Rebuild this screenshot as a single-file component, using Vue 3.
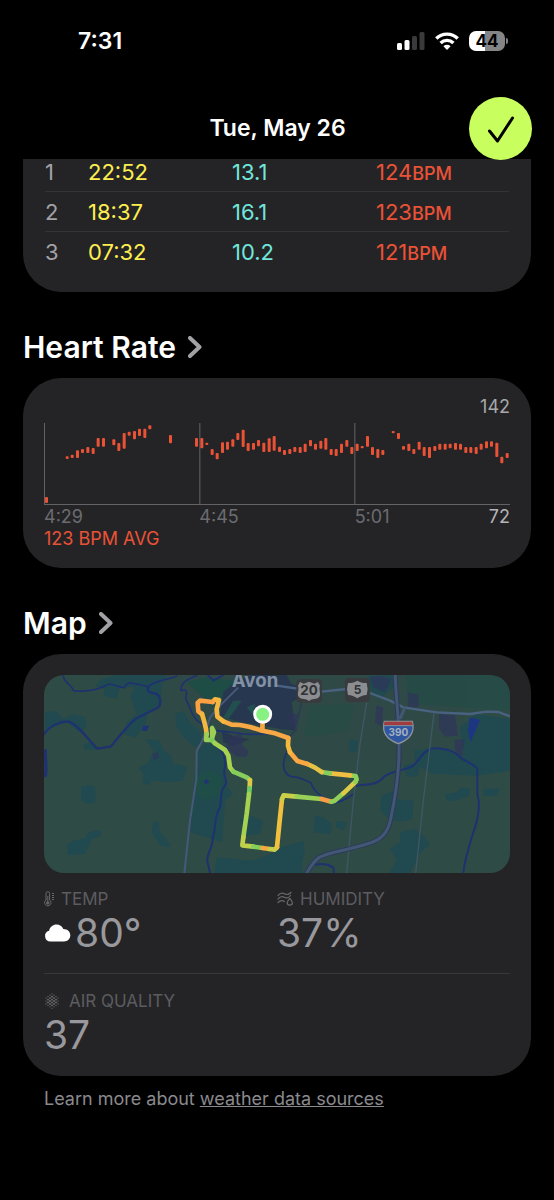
<script setup>
import { ref } from 'vue'

const splits = ref([
  { id: 1, time: '22:52', speed: '13.1', bpm: 124 },
  { id: 2, time: '18:37', speed: '16.1', bpm: 123 },
  { id: 3, time: '07:32', speed: '10.2', bpm: 121 }
])

// [slot, top, bottom], 90 slots across the chart
const bars = [
  [0, 222, 240], [4, 100, 108], [5, 95, 105], [6, 82, 105], [7, 78, 90],
  [8, 72, 90], [9, 75, 93], [10, 45, 71], [11, 45, 71], [13, 49, 67],
  [14, 60, 84], [15, 30, 77], [16, 26, 38], [17, 24, 49], [18, 17, 39],
  [19, 17, 45], [20, 7, 19], [24, 36, 61], [29, 45, 71], [30, 45, 76],
  [31, 59, 66], [32, 78, 96], [33, 90, 109], [34, 58, 90], [35, 56, 80],
  [36, 49, 71], [37, 30, 51], [38, 20, 72], [39, 60, 84], [40, 60, 80],
  [41, 51, 70], [42, 59, 87], [43, 46, 87], [44, 39, 83], [45, 71, 87],
  [46, 81, 96], [47, 78, 93], [48, 72, 87], [49, 72, 90], [50, 62, 87],
  [51, 51, 70], [52, 62, 80], [53, 53, 77], [54, 45, 80], [55, 78, 96],
  [56, 78, 99], [57, 62, 90], [58, 51, 71], [59, 72, 93], [60, 62, 84],
  [61, 69, 76], [62, 39, 71], [63, 72, 96], [64, 78, 105], [65, 81, 96],
  [67, 24, 31], [68, 30, 48], [69, 69, 80], [70, 62, 84], [71, 78, 93],
  [72, 56, 80], [73, 72, 99], [74, 72, 105], [75, 69, 84], [76, 62, 80],
  [77, 62, 80], [78, 62, 76], [79, 60, 80], [80, 62, 80], [81, 72, 90],
  [82, 72, 90], [83, 72, 93], [84, 62, 80], [85, 55, 76], [86, 55, 71],
  [87, 59, 102], [88, 101, 121], [89, 90, 105]
]

const barX = (slot) => Math.round((slot + 0.5) * 15.53) - 5

// route pieces, coloured by pace
const route = [
  { color: '#f9a846', d: 'M728 205 727 240 M727 240 690 229 660 223 635 222 610 212' },
  { color: '#f5b73f', d: 'M610 212 592 198 590 175 597 148 585 146 578 154' },
  { color: '#fba043', d: 'M578 154 540 150 533 157 535 182 546 190' },
  { color: '#f3b63e', d: 'M546 190 552 210 558 235 560 250' },
  { color: '#9bd055', d: 'M560 250 558 268 575 268 576 262 582 244 576 232 577 262' },
  { color: '#7fcf5c', d: 'M575 268 585 278' },
  { color: '#a6d250', d: 'M585 278 615 298 625 315 630 350 640 363' },
  { color: '#85ce5c', d: 'M640 363 680 380 690 388' },
  { color: '#dfc848', d: 'M690 388 689 412' },
  { color: '#72cb61', d: 'M689 412 687 430' },
  { color: '#a5d250', d: 'M687 430 680 490 670 560' },
  { color: '#bfd04b', d: 'M670 560 667 584 700 588' },
  { color: '#85d05a', d: 'M700 588 728 592' },
  { color: '#fba843', d: 'M728 592 748 595' },
  { color: '#c7ce4a', d: 'M748 595 764 597 771 590' },
  { color: '#f0c03e', d: 'M771 590 778 520 786 445' },
  { color: '#c9cf49', d: 'M786 445 791 434 830 438' },
  { color: '#98d155', d: 'M830 438 905 445' },
  { color: '#fa9d45', d: 'M905 445 934 453' },
  { color: '#91cf58', d: 'M934 453 944 450 970 428' },
  { color: '#dccb48', d: 'M970 428 1006 394' },
  { color: '#8fd059', d: 'M1006 394 1010 386 1007 376 990 374' },
  { color: '#f0be42', d: 'M990 374 930 368' },
  { color: '#85ce5c', d: 'M930 368 905 364' },
  { color: '#e4c345', d: 'M905 364 885 351 862 340' },
  { color: '#fba843', d: 'M862 340 832 331 810 305' },
  { color: '#f4b93f', d: 'M810 305 804 285 805 262' },
  { color: '#f9a846', d: 'M805 262 765 248 727 240' }
]

// dots of the air quality icon, column by column
const dots = []
const columns = [3, 4, 5, 6, 5, 4, 3]
columns.forEach((count, col) => {
  for (let i = 0; i < count; i++) {
    dots.push({
      x: 2 + col * 2,
      y: 8 + (i - (count - 1) / 2) * 2.9,
      r: i === 0 || i === count - 1 || col === 0 || col === 6 ? 0.6 : 0.9
    })
  }
})
</script>

<template>
  <div class="page">
    <header class="header">
      <div class="status">
        <span class="clock">7:31</span>
        <div class="status-icons">
          <svg width="28" height="18" viewBox="0 0 28 18">
            <rect x="0" y="11" width="5" height="7" rx="1.5" fill="#fff" />
            <rect x="7.5" y="8" width="5" height="10" rx="1.5" fill="#fff" />
            <rect x="15" y="4" width="5" height="14" rx="1.5" fill="#3a3a3c" />
            <rect x="22.5" y="0" width="5" height="18" rx="1.5" fill="#3a3a3c" />
          </svg>
          <svg width="24" height="18" viewBox="0 0 24 18" fill="none" stroke="#fff" stroke-width="3.4">
            <path d="M1.300 6.500a15.200 15.200 0 0 1 21.400 0" />
            <path d="M5.600 11a9.200 9.200 0 0 1 12.800 0" />
            <path d="M12 18 8.400 14.200a5.200 5.200 0 0 1 7.200 0Z" fill="#fff" stroke="none" />
          </svg>
          <div class="battery"><span>44</span></div>
        </div>
      </div>
      <div class="nav">
        <h1>Tue, May 26</h1>
        <button class="done" aria-label="Done">
          <svg width="30" height="30" viewBox="0 0 30 30" fill="none" stroke="#000" stroke-width="3" stroke-linecap="round" stroke-linejoin="round">
            <path d="M3.500 17 11.500 27 26.500 4" />
          </svg>
        </button>
      </div>
    </header>

    <main class="content">
      <section class="card splits">
        <table>
          <tbody>
            <tr v-for="item in splits" :key="item.id">
              <td class="num">{{ item.id }}</td>
              <td class="time">{{ item.time }}</td>
              <td class="speed">{{ item.speed }}</td>
              <td class="bpm">{{ item.bpm }}<small>BPM</small></td>
            </tr>
          </tbody>
        </table>
      </section>

      <h2>
        <a href="#">Heart Rate
          <svg class="chevron" width="14" height="22" viewBox="0 0 14 22"><path d="M2 2 11.500 11 2 20" /></svg>
        </a>
      </h2>
      <section class="card heart">
        <div class="max">142</div>
        <svg class="chart" viewBox="0 0 1398 246">
          <g fill="#636366">
            <rect x="0" y="0" width="3" height="246" />
            <rect x="466" y="0" width="3" height="246" />
            <rect x="931" y="0" width="3" height="246" />
            <rect x="0" y="243" width="1398" height="3" />
          </g>
          <rect
            v-for="bar in bars"
            :key="bar[0]"
            :x="barX(bar[0])"
            :y="bar[1]"
            width="9"
            :height="bar[2] - bar[1]"
            rx="3"
            fill="#ea5236"
          />
        </svg>
        <div class="axis">
          <span>4:29</span>
          <span>4:45</span>
          <span>5:01</span>
          <span class="min">72</span>
        </div>
        <div class="avg">123 BPM AVG</div>
      </section>

      <h2>
        <a href="#">Map
          <svg class="chevron" width="14" height="22" viewBox="0 0 14 22"><path d="M2 2 11.500 11 2 20" /></svg>
        </a>
      </h2>
      <section class="card weather">
        <svg class="map" viewBox="72 73 1398 594">
          <rect x="72" y="73" width="1398" height="594" fill="#2f4b46" />
          <!-- woods -->
          <g fill="#214a50">
            <path d="M245 85 290 73H440L425 105 420 160 385 185 375 225 345 262 310 250 320 215 350 190 330 135 345 110 300 110 290 145 250 135 255 115 225 105Z" />
            <path d="M75 185 110 180 130 205 160 190 195 200 200 230 180 245 140 215 75 240Z" />
            <path d="M190 280 215 275 240 298 195 298Z" />
            <path d="M375 265 420 270 430 300 455 315 458 338 503 348 488 390 445 395 395 390 390 402 368 400 370 370 355 352 385 335 400 300Z" />
            <path d="M183 410 205 403 226 410 226 455 205 460 183 450Z" />
            <path d="M142 580 160 570 195 562 205 545 240 538 243 555 215 565 205 590 195 610 142 614Z" />
            <path d="M398 515 415 512 420 545 450 580 450 590 420 585 395 545Z" />
            <path d="M465 190 490 180 510 215 540 240 548 275 525 290 490 260 470 230Z" />
            <path d="M530 300 560 275 600 290 618 330 615 400 640 430 615 450 607 575 510 545Z" />
            <path d="M660 505 690 495 730 510 720 550 670 555Z" />
            <path d="M590 620 700 630 750 610 780 590 850 570 855 600 845 640 850 667H582Z" />
            <path d="M885 495 910 500 935 520 930 550 880 545Z" />
            <path d="M950 510 980 515 972 540 948 530Z" />
            <path d="M1085 435 1120 420 1118 445 1180 450 1178 505 1150 512 1115 510 1080 480Z" />
            <path d="M1140 545 1185 535 1215 560 1230 585 1205 600 1170 667H1108L1130 630 1110 595 1140 575Z" />
            <path d="M1275 430 1310 425 1325 410 1350 415 1348 435 1310 450 1280 450Z" />
            <path d="M1390 415 1440 412 1430 435 1390 436Z" />
            <path d="M1320 230 1370 190 1470 205V360L1370 375 1240 370 1190 345 1180 300 1240 290 1330 310Z" />
            <path d="M990 265 1015 270 1010 305 985 305Z" />
            <path d="M1150 345 1200 330 1195 375 1160 380Z" />
            <path d="M1045 75 1115 73 1120 110 1080 145 1050 115Z" />
          </g>
          <!-- parks -->
          <g fill="#1f4d47">
            <path d="M525 380 570 360 608 380 600 430 560 450 530 430Z" />
            <path d="M500 95 560 80 640 90 660 160 600 190 550 140Z" />
            <path d="M870 165 1000 160 985 240 850 260Z" opacity="0.4" />
            <path d="M1155 73H1440L1470 100V180L1170 160Z" opacity="0.5" />
          </g>
          <!-- town -->
          <g fill="#293850">
            <path d="M610 125 650 90 690 73H800L815 100 850 110 840 140 815 155 820 190 830 240 780 235 730 225 660 215 600 195Z" />
            <path d="M605 240 650 260 690 265 640 285 610 275Z" />
          </g>
          <g fill="#30355a" opacity="0.7">
            <path d="M630 260 665 248 668 285 685 300 680 318 650 318 615 292Z" />
            <path d="M398 310 415 303 417 320 400 330Z" />
            <path d="M1162 125 1195 132 1197 170 1165 172Z" />
            <path d="M1068 165 1090 170 1085 228 1065 215Z" />
            <path d="M1257 190 1305 193 1315 255 1275 258 1257 235Z" />
            <path d="M1303 268 1335 266 1325 320 1305 300Z" />
            <path d="M800 190 840 190 820 235Z" />
            <path d="M1050 80 1080 75 1115 85 1095 125 1060 110Z" />
          </g>
          <g fill="#21504f">
            <path d="M640 150 665 150 625 205 610 200Z" />
            <path d="M680 170 705 160 700 195Z" />
          </g>
          <path d="M1350 200 1380 208 1357 262 1352 275 1344 240Z" fill="#1e3582" />
          <path d="M370 225 388 225 380 242 365 240ZM551 392 560 384 568 393 558 402Z" fill="#1f3475" />
          <!-- rivers -->
          <g fill="none" stroke="#1e3270" stroke-linecap="round" stroke-linejoin="round">
            <path d="M72 250C90 225 120 212 145 212 180 225 205 270 232 294L272 288C300 255 330 215 350 203 375 190 395 180 412 172 425 165 425 135 405 128 388 128 380 120 385 110" stroke-width="7" />
            <path d="M130 75C130 95 155 100 160 120 200 125 235 118 265 101 285 98 300 115 315 110 320 88 345 100 385 108 400 90 440 88 470 77" stroke-width="5" />
            <path d="M76 300C73 320 82 340 76 375" stroke-width="10" />
            <path d="M530 75C500 85 480 100 483 120 505 110 500 130 497 145 510 165 510 185 530 208 545 220 555 225 560 240 590 240 640 245 670 250 700 255 745 245 780 250 820 262 810 290 800 305 780 350 795 372 815 378 840 378 855 390 872 396 880 420 905 440 935 455 960 460 985 440 1000 430" stroke-width="5" />
            <path d="M1010 405C1040 400 1070 405 1090 380 1110 360 1150 362 1180 345 1200 325 1210 300 1235 294 1270 290 1305 300 1320 320 1350 340 1370 345 1372 355V430C1385 470 1370 520 1355 560 1345 600 1335 620 1330 667" stroke-width="6" />
            <path d="M560 265C600 290 620 310 615 350 605 375 625 390 617 402 600 420 605 440 600 470 580 500 590 530 578 560 580 590 560 610 562 630L570 667" stroke-width="6" />
            <path d="M875 645C890 640 915 635 940 650L942 667" stroke-width="6" />
            <path d="M565 75 580 90 610 73" stroke-width="6" />
          </g>
          <!-- roads -->
          <g fill="none" stroke-linejoin="round">
            <path d="M655 110 600 165 570 200 548 268 530 302 529 385 510 510 493 667" stroke="#46597a" stroke-width="6" />
            <path d="M770 105 840 115M905 123 980 115M1050 127 1110 150 1150 170 1250 185 1350 190 1400 183 1435 184 1470 197" stroke="#4a6281" stroke-width="7" />
            <path d="M1040 155 1020 280 1000 450 980 667M1242 187 1210 450 1187 667" stroke="#3f5765" stroke-width="4" />
            <path d="M845 155 825 240 808 260" stroke="#293c54" stroke-width="5" />
            <path d="M1126 73C1126 130 1138 200 1137 290 1138 370 1128 430 1113 500 1105 550 1080 570 1040 580 980 600 920 605 895 622 880 635 870 650 860 667" stroke="#2a3a5e" stroke-width="15" />
            <path d="M1126 73C1126 130 1138 200 1137 290 1138 370 1128 430 1113 500 1105 550 1080 570 1040 580 980 600 920 605 895 622 880 635 870 650 860 667M1140 205 1155 170" stroke="#435672" stroke-width="9" />
          </g>
          <text class="town" x="705" y="109" text-anchor="middle">Avon</text>
          <!-- route shields -->
          <g>
            <rect x="829" y="85" width="77" height="72" rx="14" fill="#383a3e" />
            <path d="M840 94 851 99 867 93 883 99 894 94 900 105C895 117 904 127 898 138 890 148 876 142 867 151 858 142 844 148 836 138 830 127 839 117 834 105Z" fill="#8b8d90" />
            <text class="shield" x="867" y="134" text-anchor="middle">20</text>
            <rect x="975" y="82" width="74" height="72" rx="12" fill="#383a3e" />
            <path d="M984 97C995 98 1003 94 1012 90 1021 94 1029 98 1040 97L1043 115 1040 133C1029 133 1021 137 1012 143 1003 137 995 133 984 133L981 115Z" fill="#8b8d90" />
            <text class="shield small" x="1013" y="130" text-anchor="middle">5</text>
            <path d="M1093 212H1177C1187 250 1165 268 1135 279 1105 268 1083 250 1093 212Z" fill="#2f579f" stroke="#8b9299" stroke-width="4" />
            <path d="M1094 213H1176L1178 223H1092Z" fill="#a23b3d" />
            <path d="M1092 225H1178" stroke="#8b9299" stroke-width="3" />
            <text class="shield interstate" x="1135" y="257" text-anchor="middle">390</text>
          </g>
          <g fill="none" stroke-width="14" stroke-linecap="round" stroke-linejoin="round">
            <path v-for="(part, index) in route" :key="index" :d="part.d" :stroke="part.color" />
          </g>
          <circle cx="728" cy="191" r="24" fill="#87f182" stroke="#fff" stroke-width="9" />
        </svg>

        <div class="stats">
          <div class="stat">
            <div class="label">
              <svg width="11" height="16" viewBox="0 0 11 16" fill="none" stroke="#68686c">
                <path d="M2 9V2.500a1.800 1.800 0 0 1 3.600 0V9a3.200 3.200 0 1 1-3.600 0Z" />
                <path d="M3.800 5V12" />
                <circle cx="3.800" cy="12" r="1.200" fill="#68686c" />
                <path d="M8 2.500H10M8 4.500H10M8 6.500H10M8 8.500H10" />
              </svg>
              TEMP
            </div>
            <div class="value">
              <svg width="27" height="18" viewBox="0 0 27 18" fill="#fff">
                <path d="M6.500 17.500A5.500 5.500 0 0 1 5.100 6.700C6 2.800 9 .500 12.500.500c3.200 0 5.600 1.700 6.800 4.500 4.200 0 7 2.800 7 6.300 0 3.600-2.700 6.200-6.300 6.200Z" />
              </svg>
              80°
            </div>
          </div>
          <div class="stat">
            <div class="label">
              <svg width="17" height="16" viewBox="0 0 17 16" fill="none" stroke="#68686c" stroke-width="1.2" stroke-linecap="round">
                <path d="M1 4.500C4 1 6 2 8 3S12 3.500 14 1.500M1 8C4 4.500 6 5.500 8 6.500 10 7.500 12 6.500 13.500 4.500M1 11.500C4 8.500 6 9.500 7.500 10.500" />
                <path d="M12.800 7.500C11.300 9 10.200 10.200 10.200 11.500a2.600 2.600 0 0 0 5.200 0C15.400 10.200 14.300 9 12.800 7.500Z" />
              </svg>
              HUMIDITY
            </div>
            <div class="value">37%</div>
          </div>
        </div>
        <div class="stats air">
          <div class="stat">
            <div class="label wide">
              <svg width="16" height="16" viewBox="0 0 16 16" fill="#747478">
                <circle v-for="(dot, index) in dots" :key="index" :cx="dot.x" :cy="dot.y" :r="dot.r" />
              </svg>
              AIR QUALITY
            </div>
            <div class="value">37</div>
          </div>
        </div>
      </section>

      <p class="footnote">Learn more about <a href="#">weather data sources</a></p>
    </main>
  </div>
</template>

<style>
body {
  margin: 0;
  background: #000;
}
</style>

<style scoped>
.page {
  min-height: 100vh;
  background: #000;
  color: #fff;
  font-family: Inter, "Liberation Sans", sans-serif;
  font-size: 18px;
}

/* header stays above the scrolled splits card */
.header {
  position: sticky;
  top: 0;
  z-index: 1;
  background: #000;
}

.status {
  display: flex;
  align-items: center;
  justify-content: space-between;
  height: 82px;
  padding: 0 46px 0 78px;
}

.clock {
  font-size: 23px;
  font-weight: 600;
}

.status-icons {
  display: flex;
  align-items: center;
  gap: 10px;
}

.battery {
  position: relative;
  width: 36px;
  height: 20px;
  margin-right: 3px;
  border-radius: 7px;
  background: linear-gradient(90deg, #fff 44%, #858587 44%);
  color: #000;
  font-size: 17px;
  font-weight: 700;
  line-height: 20px;
  text-align: center;
}

.battery::after {
  content: "";
  position: absolute;
  right: -3px;
  top: 7px;
  width: 2px;
  height: 6px;
  border-radius: 0 2px 2px 0;
  background: #858587;
}

.nav {
  display: grid;
  grid-template-columns: 1fr auto 1fr;
  height: 62px;
  padding: 15px 22px 0 23px;
}

h1 {
  grid-column: 2;
  margin: 0;
  font-size: 23px;
  font-weight: 600;
  line-height: 63px;
}

.done {
  display: flex;
  align-items: center;
  justify-content: center;
  justify-self: end;
  width: 63px;
  height: 63px;
  padding: 0;
  border: 0;
  border-radius: 50%;
  background: #c8ff5f;
}

.content {
  padding: 0 23px;
}

.card {
  border-radius: 38px;
  background: #242426;
}

.splits {
  margin-top: -7px;
  padding: 0 22px 21px;
  border-radius: 0 0 38px 38px;
}

table {
  width: 100%;
  border-collapse: collapse;
  table-layout: fixed;
  font-size: 22px;
}

td {
  height: 39px;
  padding: 0;
  border-bottom: 1px solid #343437;
}

tr:last-child td {
  border-bottom: 0;
}

.num {
  width: 43px;
  color: #a1a1a6;
}

.time {
  color: #fdee50;
}

.speed {
  color: #70e6dc;
}

.bpm {
  width: 133px;
  color: #ea5236;
}

.bpm small {
  font-size: 18px;
  font-weight: 500;
}

h2 {
  margin: 24px 0 0;
  font-size: 30px;
  font-weight: 600;
  line-height: 62px;
}

h2 a {
  display: inline-flex;
  align-items: center;
  gap: 12px;
  color: #fff;
  text-decoration: none;
}

.chevron {
  fill: none;
  stroke: #a1a1a6;
  stroke-width: 4;
  stroke-linecap: round;
  stroke-linejoin: round;
}

.heart {
  padding: 17px 21px 19px;
}

.max {
  margin-bottom: 4px;
  color: #a8a8ac;
  line-height: 24px;
  text-align: right;
}

.chart {
  display: block;
  width: 100%;
}

.axis {
  display: grid;
  grid-template-columns: 2fr 2fr 1fr 1fr;
  color: #6c6c70;
  line-height: 24px;
}

.min {
  color: #b4b4b8;
  text-align: right;
}

.avg {
  color: #ea5236;
  line-height: 20px;
}

.weather {
  padding: 21px 21px 19px;
}

.map {
  display: block;
  width: 100%;
  border-radius: 20px;
}

.town {
  fill: #8291a4;
  font-size: 56px;
  font-weight: 700;
}

.shield {
  fill: #303236;
  font-size: 40px;
  font-weight: 700;
}

.shield.small {
  font-size: 36px;
}

.shield.interstate {
  fill: #a5b0c0;
  font-size: 30px;
}

.stats {
  display: grid;
  grid-template-columns: 1fr 1fr;
  padding: 14px 0 18px;
}

.air {
  padding: 15px 0 0;
  border-top: 1px solid #37373a;
}

.label {
  display: flex;
  align-items: center;
  gap: 6px;
  color: #5c5c60;
  font-size: 17px;
  line-height: 24px;
}

.wide {
  gap: 9px;
}

.value {
  display: flex;
  align-items: center;
  gap: 4px;
  color: #98989d;
  font-size: 39px;
  font-weight: 400;
  line-height: 44px;
}

.footnote {
  margin: 11px 21px 0;
  color: #8a8a8e;
  line-height: 24px;
}

.footnote a {
  color: inherit;
}
</style>
